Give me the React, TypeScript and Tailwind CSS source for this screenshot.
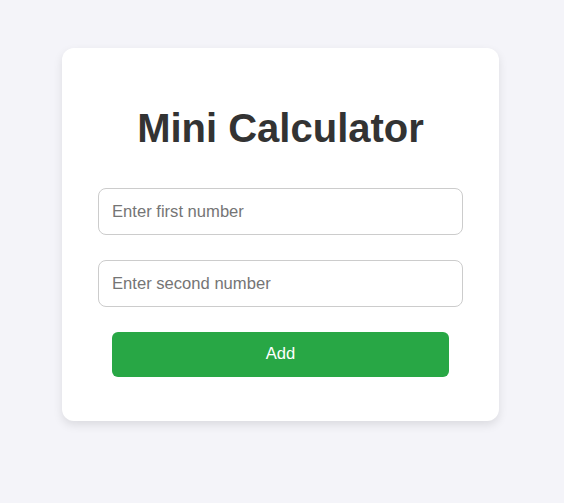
export default function App() {
  return (
    <div
      className="min-h-[503px] bg-[#f4f4f9] pt-[48px] pl-[62px]"
      style={{ fontFamily: '"Liberation Sans", Arial, sans-serif' }}
    >
      <div className="w-[437px] h-[373px] bg-white rounded-xl shadow-[0_4px_10px_rgba(0,0,0,0.1)] flex flex-col items-center pt-[57px]">
        <h1 className="text-[40px] leading-[46px] font-bold text-[#333]">
          Mini Calculator
        </h1>
        <input
          type="number"
          placeholder="Enter first number"
          className="mt-[37px] w-[365px] h-[47px] px-[13px] text-[16.6px] border border-[#ccc] rounded-lg outline-none placeholder:text-[#757575]"
        />
        <input
          type="number"
          placeholder="Enter second number"
          className="mt-[25px] w-[365px] h-[47px] px-[13px] text-[16.6px] border border-[#ccc] rounded-lg outline-none placeholder:text-[#757575]"
        />
        <button className="mt-[25px] w-[337px] h-[45px] bg-[#28a745] text-white text-[16.6px] rounded-md">
          Add
        </button>
      </div>
    </div>
  );
}
